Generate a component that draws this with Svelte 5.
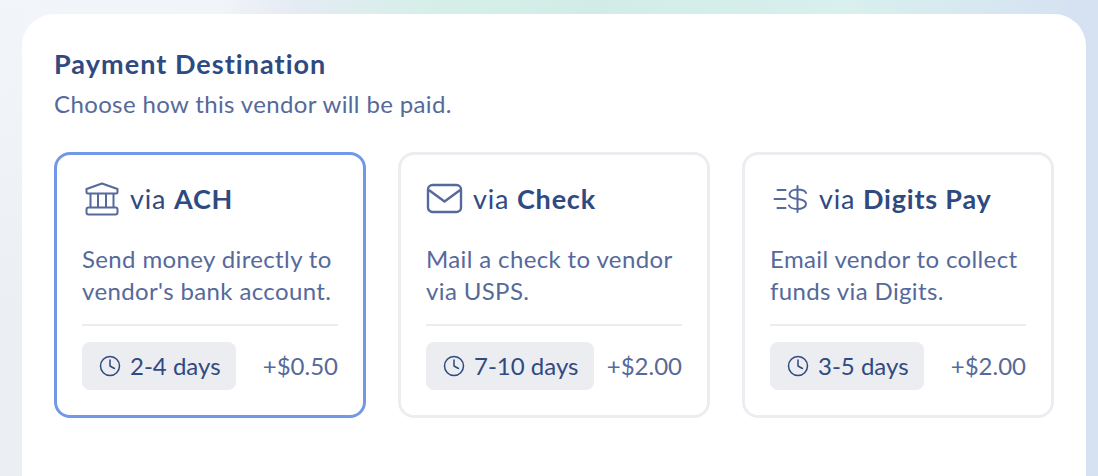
<script>
  const options = [
    { id: 'ach', name: 'ACH', desc: ["Send money directly to", "vendor's bank account."], days: '2-4 days', fee: '+$0.50', active: true },
    { id: 'check', name: 'Check', desc: ['Mail a check to vendor', 'via USPS.'], days: '7-10 days', fee: '+$2.00' },
    { id: 'pay', name: 'Digits Pay', desc: ['Email vendor to collect', 'funds via Digits.'], days: '3-5 days', fee: '+$2.00' }
  ];
</script>

<div class="page">
  <section class="panel">
    <h2>Payment Destination</h2>
    <p class="sub">Choose how this vendor will be paid.</p>
    <div class="cards">
      {#each options as o}
        <article class="card" class:active={o.active}>
          <div class="head">
            {#if o.id === 'ach'}
              <svg class="icon" width="38" height="34" viewBox="0 0 38 34" fill="none" stroke="#56699b" stroke-width="2" stroke-linejoin="round" stroke-linecap="round">
                <path d="M4.500 10V7L20 1.500L35.500 7V10a1.500 1.500 0 0 1-1.500 1.500H6a1.500 1.500 0 0 1-1.500-1.500Z"/>
                <path d="M8.500 12V24.500M16 12V24.500M24 12V24.500M31.500 12V24.500"/>
                <rect x="4.500" y="25.500" width="31" height="7" rx="2"/>
              </svg>
            {:else if o.id === 'check'}
              <svg class="icon check" width="37" height="34" viewBox="0 0 37 34" fill="none" stroke="#56699b" stroke-width="2.400" stroke-linejoin="round" stroke-linecap="round">
                <rect x="2" y="3" width="33" height="27" rx="4.500"/>
                <path d="M3.500 8.500L18.500 19.500L33.500 8.500"/>
              </svg>
            {:else}
              <svg class="icon" width="39" height="34" viewBox="0 0 39 34" fill="none" stroke="#56699b" stroke-width="2" stroke-linecap="round" stroke-linejoin="round">
                <path d="M7.500 8H15.500M4.500 17H15.500M7.500 26H15.500"/>
                <path d="M36 11C35 8.500 32 7.500 27.500 7.500C23 7.500 19.500 9.500 19.500 12.500C19.500 15.500 23.500 16.500 27.500 17C31.500 17.500 36 18.500 36 22C36 25 32 27 27.500 27C23.500 27 20 26 19 23.500M27.500 4V30"/>
              </svg>
            {/if}
            <span class="via">via <strong>{o.name}</strong></span>
          </div>
          <p class="desc">{o.desc[0]}<br />{o.desc[1]}</p>
          <div class="foot">
            <span class="chip">
              <svg width="22" height="22" viewBox="0 0 22 22" fill="none" stroke="#2f4a80" stroke-width="1.500" stroke-linecap="round" stroke-linejoin="round">
                <circle cx="11" cy="11" r="9.500"/>
                <path d="M11 5V11L15.500 13.500"/>
              </svg>
              <span class="raised">{o.days}</span>
            </span>
            <span class="fee raised">{o.fee}</span>
          </div>
        </article>
      {/each}
    </div>
  </section>
</div>

<style>
  :global(body) {
    margin: 0;
  }
  .page {
    box-sizing: border-box;
    width: 1098px;
    height: 476px;
    overflow: hidden;
    padding: 14px 12px 0 22px;
    font-family: Lato, "Noto Sans", sans-serif;
    background:
      linear-gradient(180deg, rgba(235, 239, 244, 0) 0%, #ebeff4 70%) 0 0 / 22px 100% no-repeat,
      linear-gradient(90deg, #f2f5f9 0%, #f1f4f8 20%, #e5ebf4 27%, #d6efe9 38%, #d1ece6 54%, #d8f0ee 77%, #d6e2f2 98%);
  }
  .panel {
    box-sizing: border-box;
    height: 480px;
    padding: 33px 32px 0;
    background: #fff;
    border-radius: 32px 32px 0 0;
  }
  h2 {
    margin: 0;
    font-size: 27px;
    line-height: 34px;
    font-weight: 700;
    letter-spacing: 1.05px;
    color: #2f4a80;
  }
  .sub {
    margin: 9px 0 0;
    font-size: 24px;
    line-height: 28px;
    letter-spacing: 0.37px;
    color: #56699b;
  }
  .cards {
    display: flex;
    gap: 32px;
    margin-top: 34px;
  }
  .card {
    box-sizing: border-box;
    width: 312px;
    height: 266px;
    padding: 27px 25px 0;
    border: 3px solid #ecedf1;
    border-radius: 16px;
  }
  .card.active {
    border-color: #7298e8;
  }
  .head {
    display: flex;
    align-items: center;
    gap: 10px;
    height: 34px;
  }
  .icon {
    flex: none;
  }
  .via {
    font-size: 27px;
    line-height: 34px;
    letter-spacing: 0.8px;
    color: #2f4a80;
  }
  .via strong {
    font-weight: 700;
  }
  .desc {
    margin: 27px 0 0;
    font-size: 24px;
    line-height: 32px;
    letter-spacing: 0.37px;
    color: #56699b;
    white-space: nowrap;
  }
  .foot {
    display: flex;
    justify-content: space-between;
    align-items: center;
    margin-top: 17px;
    padding-top: 16px;
    border-top: 2px solid #ecedf3;
  }
  .chip {
    display: inline-flex;
    align-items: center;
    gap: 9px;
    height: 48px;
    padding: 0 15.600px 0 17px;
    border-radius: 8px;
    background: #ecedf1;
    font-size: 24px;
    color: #2f4a80;
  }
  .raised {
    margin-bottom: 2px;
  }
  .fee {
    font-size: 24px;
    color: #56699b;
  }
</style>
